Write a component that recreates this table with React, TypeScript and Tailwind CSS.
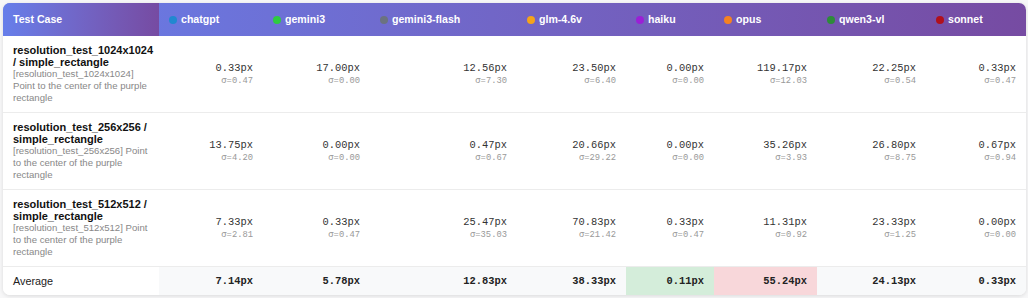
import React from "react";

type Model = { name: string; dot: string; width: string };

const models: Model[] = [
  { name: "chatgpt", dot: "bg-[#2188d0]", width: "w-[104px]" },
  { name: "gemini3", dot: "bg-[#2ecc40]", width: "w-[107px]" },
  { name: "gemini3-flash", dot: "bg-[#6b7280]", width: "w-[147px]" },
  { name: "glm-4.6v", dot: "bg-[#f5a31a]", width: "w-[109px]" },
  { name: "haiku", dot: "bg-[#9b1fd6]", width: "w-[88px]" },
  { name: "opus", dot: "bg-[#f58220]", width: "w-[103px]" },
  { name: "qwen3-vl", dot: "bg-[#2e8b3a]", width: "w-[109px]" },
  { name: "sonnet", dot: "bg-[#b0101c]", width: "w-[100px]" },
];

const rows = [
  {
    title: "resolution_test_1024x1024 / simple_rectangle",
    sub: "[resolution_test_1024x1024] Point to the center of the purple rectangle",
    values: [
      ["0.33", "0.47"],
      ["17.00", "0.00"],
      ["12.56", "7.30"],
      ["23.50", "6.40"],
      ["0.00", "0.00"],
      ["119.17", "12.03"],
      ["22.25", "0.54"],
      ["0.33", "0.47"],
    ],
  },
  {
    title: "resolution_test_256x256 / simple_rectangle",
    sub: "[resolution_test_256x256] Point to the center of the purple rectangle",
    values: [
      ["13.75", "4.20"],
      ["0.00", "0.00"],
      ["0.47", "0.67"],
      ["20.66", "29.22"],
      ["0.00", "0.00"],
      ["35.26", "3.93"],
      ["26.80", "8.75"],
      ["0.67", "0.94"],
    ],
  },
  {
    title: "resolution_test_512x512 / simple_rectangle",
    sub: "[resolution_test_512x512] Point to the center of the purple rectangle",
    values: [
      ["7.33", "2.81"],
      ["0.33", "0.47"],
      ["25.47", "35.03"],
      ["70.83", "21.42"],
      ["0.33", "0.47"],
      ["11.31", "0.92"],
      ["23.33", "1.25"],
      ["0.00", "0.00"],
    ],
  },
];

// best / worst averages get highlighted
const averages = [
  { v: "7.14", bg: "bg-[#f8f9fa]" },
  { v: "5.78", bg: "bg-[#f8f9fa]" },
  { v: "12.83", bg: "bg-[#f8f9fa]" },
  { v: "38.33", bg: "bg-[#f8f9fa]" },
  { v: "0.11", bg: "bg-[#d4edda]" },
  { v: "55.24", bg: "bg-[#f8d7da]" },
  { v: "24.13", bg: "bg-[#f8f9fa]" },
  { v: "0.33", bg: "bg-[#f8f9fa]" },
];

const sans = "font-['Liberation_Sans',Arial,sans-serif]";
const mono = "font-['Liberation_Mono','Courier_New',monospace]";

export default function App() {
  return (
    <div className={`min-h-screen bg-[#f7f7f8] pt-[3px] pl-[3px] ${sans}`}>
      <div className="w-[1023px] overflow-hidden rounded-[7px] bg-white shadow-[0_1px_4px_rgba(0,0,0,0.12)]">
        <table className="w-[1023px] table-fixed border-collapse">
          <thead>
            <tr className="bg-gradient-to-r from-[#667eea] to-[#764ba2] text-white">
              <th className="h-[33px] w-[156px] bg-gradient-to-r from-[#667eea] to-[#764ba2] py-0 pl-[10px] pr-[8px] text-left text-[10.6px] font-bold leading-[13px]">
                Test Case
              </th>
              {models.map((m) => (
                <th
                  key={m.name}
                  className={`${m.width} h-[33px] px-[10px] py-0 text-left text-[10.6px] font-bold leading-[13px]`}
                >
                  <span className="flex items-center gap-[4px]">
                    <span className={`inline-block h-[8px] w-[8px] rounded-full ${m.dot}`} />
                    {m.name}
                  </span>
                </th>
              ))}
            </tr>
          </thead>
          <tbody>
            {rows.map((r) => (
              <tr key={r.title} className="border-b border-[#ececec]">
                <td className="bg-white py-[8px] pl-[10px] pr-[6px] align-top">
                  <div className="text-[11px] font-bold leading-[12px] text-[#111]">{r.title}</div>
                  <div className="text-[9.6px] leading-[12px] text-[#888]">{r.sub}</div>
                </td>
                {r.values.map(([v, s], i) => (
                  <td key={i} className={`px-[10px] text-right align-middle ${mono}`}>
                    <div className="text-[10.4px] leading-[13px] text-[#333]">{v}px</div>
                    <div className="text-[8.8px] leading-[12px] text-[#999]">σ={s}</div>
                  </td>
                ))}
              </tr>
            ))}
            <tr className="border-t border-[#dedede]">
              <td className="bg-white py-[8px] pl-[10px] pr-[8px] text-[10.8px] leading-[12px] text-[#222]">
                Average
              </td>
              {averages.map((a, i) => (
                <td
                  key={i}
                  className={`${a.bg} px-[10px] py-[8px] text-right text-[10.4px] font-bold leading-[12px] text-[#222] ${mono}`}
                >
                  {a.v}px
                </td>
              ))}
            </tr>
          </tbody>
        </table>
      </div>
    </div>
  );
}
